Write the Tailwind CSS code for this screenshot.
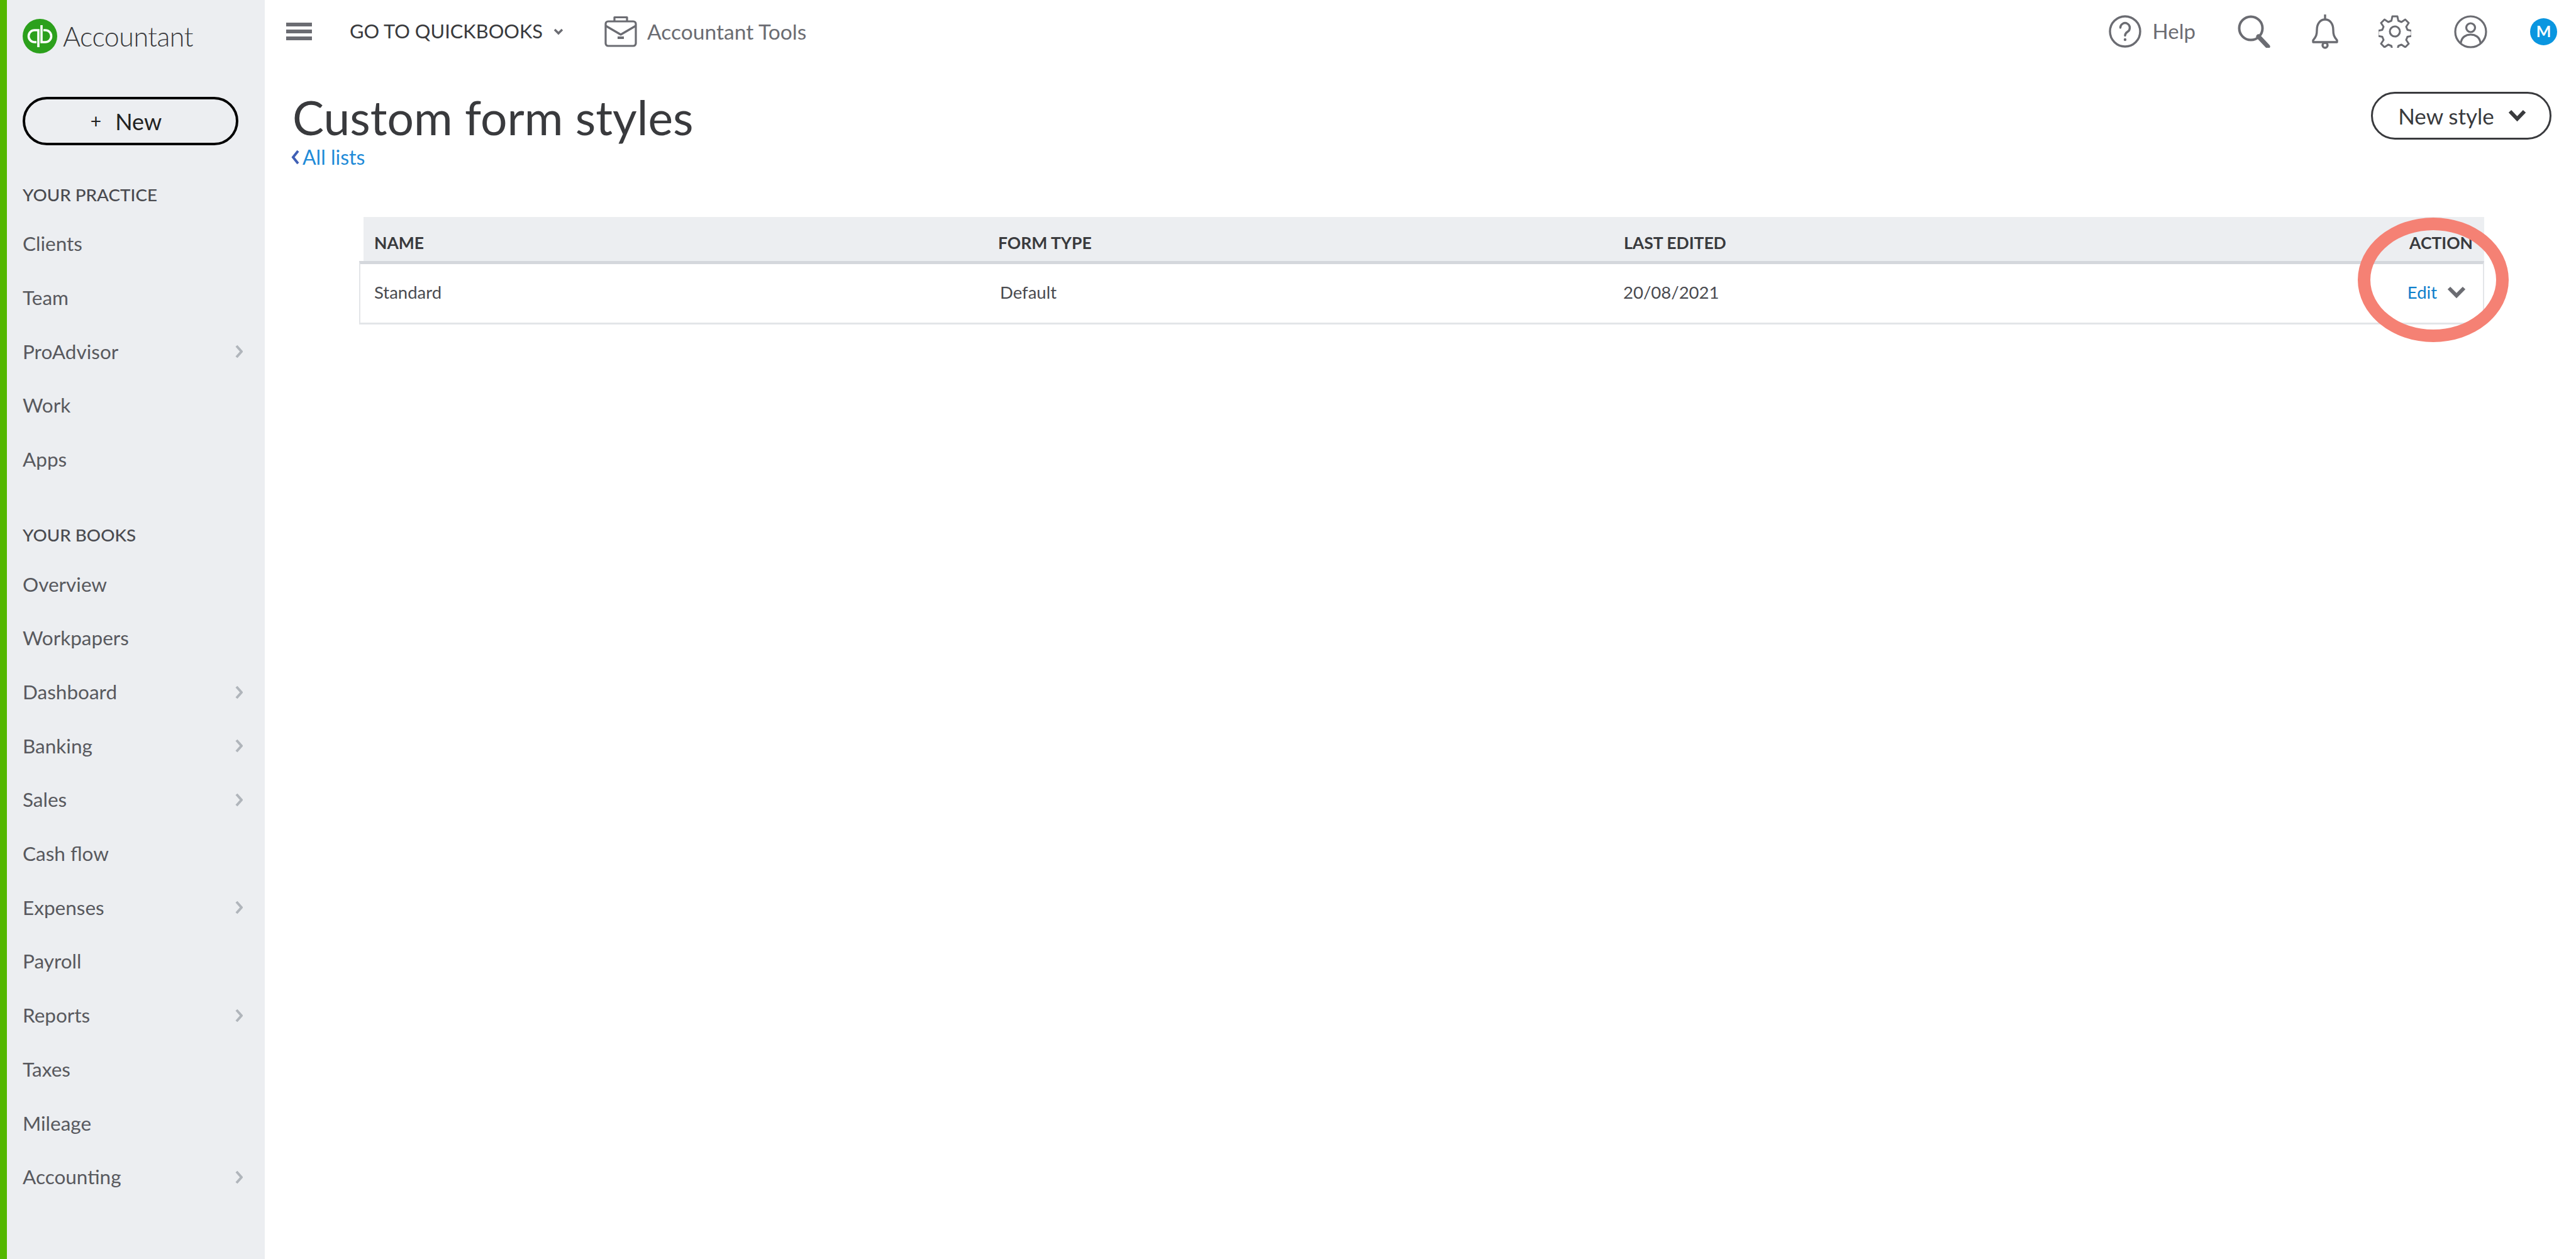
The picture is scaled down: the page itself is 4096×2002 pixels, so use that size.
<!DOCTYPE html>
<html lang="en">
<head>
    <meta charset="UTF-8">
    <title>Custom form styles</title>
    <script src="https://cdn.jsdelivr.net/npm/@tailwindcss/browser@4"></script>
</head>
<body class="bg-white text-[#393a3d] font-['Lato',sans-serif]">
<div class="flex h-screen overflow-hidden">

    <!-- Sidebar -->
    <aside class="w-[421px] shrink-0 bg-[#eceef1] border-l-[11px] border-[#53b700] pl-[25px] pr-[35px] pt-[30px]">
        <div class="flex items-center h-[55px] gap-[9px]">
            <svg class="w-[55px] h-[55px]" viewBox="0 0 55 55">
                <circle cx="27.5" cy="27.5" r="27.5" fill="#2ca01c"/>
                <g fill="none" stroke="#fff" stroke-width="3.6">
                    <path d="M25 45V18h-6a9.500 9.500 0 0 0 0 19h3"/>
                    <path d="M30 10v27h6a9.500 9.500 0 0 0 0-19h-3"/>
                </g>
            </svg>
            <span class="text-[43px] leading-none font-light text-[#393a3d] tracking-[-0.5px]">Accountant</span>
        </div>
        <button class="mt-[69px] w-[343px] h-[77px] pr-[14px] rounded-full border-[4px] border-black text-[36px] text-[#222] flex items-center justify-center gap-[22px]">
            <span class="text-[30px]">+</span><span>New</span>
        </button>

        <h3 class="mt-[59px] h-[40px] flex items-center text-[27.8px] font-medium text-[#4a4b50] whitespace-nowrap">YOUR PRACTICE</h3>
        <nav class="mt-[15px] text-[31.5px] text-[#58595e]">
            <a class="h-[85.7px] flex items-center justify-between">Clients</a>
            <a class="h-[85.7px] flex items-center justify-between">Team</a>
            <a class="h-[85.7px] flex items-center justify-between">ProAdvisor
                <svg class="w-[12px] h-[22px]" viewBox="0 0 12 22" fill="none" stroke="#b0b5bb" stroke-width="4"><path d="M2 2l8 9-8 9"/></svg>
            </a>
            <a class="h-[85.7px] flex items-center justify-between">Work</a>
            <a class="h-[85.7px] flex items-center justify-between">Apps</a>
        </nav>

        <h3 class="mt-[57px] h-[40px] flex items-center text-[27.8px] font-medium text-[#4a4b50] whitespace-nowrap">YOUR BOOKS</h3>
        <nav class="mt-[16px] text-[31.5px] text-[#58595e]">
            <a class="h-[85.7px] flex items-center justify-between">Overview</a>
            <a class="h-[85.7px] flex items-center justify-between">Workpapers</a>
            <a class="h-[85.7px] flex items-center justify-between">Dashboard
                <svg class="w-[12px] h-[22px]" viewBox="0 0 12 22" fill="none" stroke="#b0b5bb" stroke-width="4"><path d="M2 2l8 9-8 9"/></svg>
            </a>
            <a class="h-[85.7px] flex items-center justify-between">Banking
                <svg class="w-[12px] h-[22px]" viewBox="0 0 12 22" fill="none" stroke="#b0b5bb" stroke-width="4"><path d="M2 2l8 9-8 9"/></svg>
            </a>
            <a class="h-[85.7px] flex items-center justify-between">Sales
                <svg class="w-[12px] h-[22px]" viewBox="0 0 12 22" fill="none" stroke="#b0b5bb" stroke-width="4"><path d="M2 2l8 9-8 9"/></svg>
            </a>
            <a class="h-[85.7px] flex items-center justify-between">Cash flow</a>
            <a class="h-[85.7px] flex items-center justify-between">Expenses
                <svg class="w-[12px] h-[22px]" viewBox="0 0 12 22" fill="none" stroke="#b0b5bb" stroke-width="4"><path d="M2 2l8 9-8 9"/></svg>
            </a>
            <a class="h-[85.7px] flex items-center justify-between">Payroll</a>
            <a class="h-[85.7px] flex items-center justify-between">Reports
                <svg class="w-[12px] h-[22px]" viewBox="0 0 12 22" fill="none" stroke="#b0b5bb" stroke-width="4"><path d="M2 2l8 9-8 9"/></svg>
            </a>
            <a class="h-[85.7px] flex items-center justify-between">Taxes</a>
            <a class="h-[85.7px] flex items-center justify-between">Mileage</a>
            <a class="h-[85.7px] flex items-center justify-between">Accounting
                <svg class="w-[12px] h-[22px]" viewBox="0 0 12 22" fill="none" stroke="#b0b5bb" stroke-width="4"><path d="M2 2l8 9-8 9"/></svg>
            </a>
        </nav>
    </aside>

    <!-- Main -->
    <main class="flex-1 min-w-0">

        <!-- Top bar -->
        <header class="h-[100px] flex items-center pl-[34px] pr-[30px]">
            <div class="w-[41px] flex flex-col gap-[5px]">
                <span class="h-[6px] bg-[#6b6c72]"></span>
                <span class="h-[6px] bg-[#6b6c72]"></span>
                <span class="h-[6px] bg-[#6b6c72]"></span>
            </div>
            <span class="ml-[60px] text-[30.800px] text-[#393a3d] whitespace-nowrap">GO TO QUICKBOOKS</span>
            <svg class="ml-[17px] w-[16px] h-[11px]" viewBox="0 0 16 11" fill="none" stroke="#6b6c72" stroke-width="3.5"><path d="M2 2l6 6 6-6"/></svg>
            <svg class="ml-[65px] w-[52px] h-[50px]" viewBox="0 0 52 50" fill="none" stroke="#6b6c72" stroke-width="3.2" stroke-linejoin="round">
                <rect x="2" y="9" width="48" height="39" rx="4"/>
                <path d="M16 9V2.500h20V9"/>
                <path d="M2 16l24 14 24-14"/>
                <path d="M21 35h10" stroke-width="4"/>
            </svg>
            <span class="ml-[16px] text-[33.600px] text-[#6b6c72] whitespace-nowrap">Accountant Tools</span>

            <div class="ml-auto flex items-center">
                <svg class="w-[52px] h-[52px]" viewBox="0 0 52 52" fill="none" stroke="#6b6c72" stroke-width="3.4">
                    <circle cx="26" cy="26" r="24"/>
                    <path d="M18.500 20a7.500 7.500 0 1 1 11.500 6.500c-2.500 1.600-4 3-4 6" stroke-linecap="round"/>
                    <circle cx="26" cy="39" r="2.200" fill="#6b6c72" stroke="none"/>
                </svg>
                <span class="ml-[18px] text-[33px] text-[#6b6c72]">Help</span>
                <svg class="ml-[67px] w-[52px] h-[52px]" viewBox="0 0 52 52" fill="none" stroke="#6b6c72" stroke-width="4">
                    <circle cx="21" cy="21" r="18.500"/>
                    <path d="M33 34l15 16" stroke-width="7" stroke-linecap="round"/>
                </svg>
                <svg class="ml-[66px] w-[42px] h-[56px]" viewBox="0 0 42 56" fill="none" stroke="#6b6c72" stroke-width="3.4" stroke-linejoin="round">
                    <path d="M21 1v7"/>
                    <path d="M8 26c0-10 5-17 13-17s13 7 13 17c0 7 1 10 6 16v3H2v-3c5-6 6-9 6-16z"/>
                    <circle cx="21" cy="50" r="4"/>
                </svg>
                <svg class="ml-[64px] w-[52px] h-[52px]" viewBox="0 0 52 52" fill="none" stroke="#6b6c72" stroke-width="3" stroke-linejoin="round">
                    <circle cx="26" cy="26" r="8"/>
                    <path d="M22 2h8l1.500 7 5 2 6-4 5.500 5.500-4 6 2 5 7 1.500v8l-7 1.500-2 5 4 6-5.500 5.500-6-4-5 2-1.500 7h-8l-1.500-7-5-2-6 4-5.500-5.500 4-6-2-5-7-1.500v-8l7-1.500 2-5-4-6 5.500-5.500 6 4 5-2z"/>
                </svg>
                <svg class="ml-[68px] w-[53px] h-[53px]" viewBox="0 0 53 53" fill="none" stroke="#6b6c72" stroke-width="3.2">
                    <circle cx="26.500" cy="26.500" r="24.500"/>
                    <circle cx="26.500" cy="20" r="7"/>
                    <path d="M11 44c1-9 8-13 15.500-13S41 35 42 44"/>
                </svg>
                <span class="ml-[68px] w-[43px] h-[43px] rounded-full bg-[#0a96e0] text-white text-[25px] font-bold flex items-center justify-center">M</span>
            </div>
        </header>

        <!-- Title -->
        <div class="flex justify-between items-start pl-[42px] pr-[39px] pt-[46px]">
            <div>
                <h1 class="mt-[2px] ml-[2px] text-[75px] leading-[76px] text-[#393a3d] whitespace-nowrap">Custom form styles</h1>
                <a class="mt-[11px] flex items-center gap-[5px] text-[32px] leading-[30px] text-[#1f8bd8]">
                    <svg class="w-[13px] h-[24px]" viewBox="0 0 13 24" fill="none" stroke="#3f5fb5" stroke-width="4"><path d="M11 2L3 12l8 10"/></svg>
                    All lists
                </a>
            </div>
            <button class="w-[287px] h-[76px] pl-[3px] rounded-full border-[3px] border-[#393a3d] text-[35px] text-[#393a3d] flex items-center justify-center gap-[22px]">
                New style
                <svg class="w-[29px] h-[20px]" viewBox="0 0 29 20" fill="none" stroke="#393a3d" stroke-width="6"><path d="M3 3l11.500 12L26 3"/></svg>
            </button>
        </div>

        <!-- Table -->
        <section class="relative mt-[80px] ml-[150px] w-[3379px]">
            <div class="ml-[7px] h-[70px] bg-[#eceef1] grid grid-cols-[992px_995px_1fr] items-center pl-[17px] pr-[18px] pt-[14px] text-[26.500px] font-bold text-[#393a3d]">
                <span>NAME</span>
                <span>FORM TYPE</span>
                <span class="flex justify-between"><span>LAST EDITED</span><span>ACTION</span></span>
            </div>
            <div class="h-[101px] border-t-[5px] border-t-[#d4d7dc] border-x-2 border-x-[#e3e5e8] border-b-[3px] border-b-[#e3e5e8] grid grid-cols-[993px_993px_1fr] items-center pl-[22px] pr-[27px] pb-[4px] text-[27.500px] text-[#4a4b50]">
                <span>Standard</span>
                <span class="pl-[2px]">Default</span>
                <span class="flex justify-between items-center">
                    <span>20/08/2021</span>
                    <span class="flex items-center gap-[16px]">
                        <span class="text-[#0d7fcb]">Edit</span>
                        <svg class="w-[30px] h-[20px]" viewBox="0 0 30 20" fill="none" stroke="#6b6c72" stroke-width="6"><path d="M3 3l12 12L27 3"/></svg>
                    </span>
                </span>
            </div>
            <!-- annotation ring drawn over the table -->
            <div class="absolute left-[3178px] top-[1px] w-[240px] h-[198px] rounded-[50%] border-[20px] border-[#f58174]"></div>
        </section>
    </main>
</div>
</body>
</html>
